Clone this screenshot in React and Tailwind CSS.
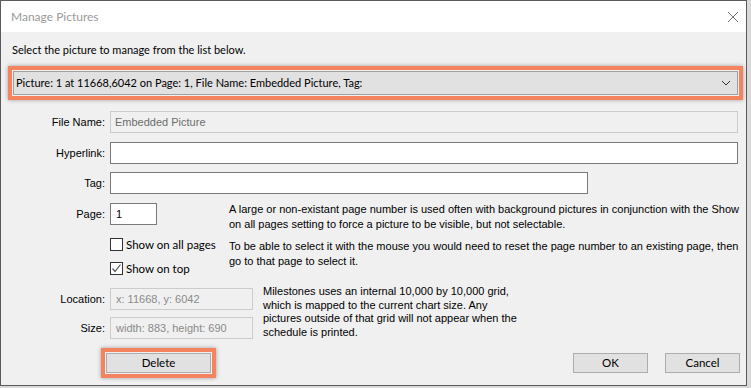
import React from "react";

function Label({ children }) {
  return (
    <div className="w-[104px] shrink-0 text-right text-[11px] text-black font-['Liberation_Sans',sans-serif]">
      {children}
    </div>
  );
}

function Checkbox({ checked, label, className = "" }) {
  return (
    <div className={"flex items-center " + className}>
      <div className="w-[13px] h-[13px] border border-[#333] bg-white flex items-center justify-center">
        {checked && (
          <svg width="11" height="11" viewBox="0 0 11 11">
            <path d="M1.5 5.5 L4 8.5 L9.5 1.5" fill="none" stroke="#555" strokeWidth="1.2" />
          </svg>
        )}
      </div>
      <span className="ml-[3px] text-[11.5px] text-black font-['Lato',sans-serif] leading-none">
        {label}
      </span>
    </div>
  );
}

export default function App() {
  return (
    <div className="w-[751px] h-[388px] bg-[#d9d9d9] overflow-hidden">
      <div className="w-[747px] h-[386px] border border-[#5a5a5a] bg-[#f0f0f0] flex flex-col">
        {/* Title bar */}
        <div className="h-[31px] bg-white flex items-center justify-between pl-[10px] pr-[6px]">
          <span className="text-[12px] text-[#9a9a9a] font-['Lato',sans-serif]">Manage Pictures</span>
          <svg width="12" height="12" viewBox="0 0 12 12" className="mr-[1px]">
            <path d="M1 1 L11 11 M11 1 L1 11" stroke="#666" strokeWidth="0.9" />
          </svg>
        </div>

        {/* Select text */}
        <div className="mt-[10px] pl-[11px] text-[11px] leading-[16px] text-black font-['Lato',sans-serif]">
          Select the picture to manage from the list below.
        </div>

        {/* Combobox with orange highlight */}
        <div className="mt-[8px] ml-[7px] mr-[3px] h-[34px] border-[4px] border-[#f4845f] p-[1px] shadow-[0_0_4px_rgba(0,0,0,0.35)]">
          <div className="h-full border border-[#a0a0a0] bg-[#e1e1e1] flex items-center justify-between pl-[2px] pr-[6px]">
            <span className="text-[11px] text-black font-['Lato',sans-serif]">
              Picture: 1 at 11668,6042 on Page: 1, File Name: Embedded Picture, Tag:
            </span>
            <svg width="10" height="6" viewBox="0 0 10 6">
              <path d="M1 1 L5 5 L9 1" fill="none" stroke="#333" strokeWidth="1" />
            </svg>
          </div>
        </div>

        {/* File Name */}
        <div className="mt-[11px] flex items-center">
          <Label>File Name:</Label>
          <div className="ml-[5px] w-[628px] h-[22px] border border-[#cccccc] bg-[#f0f0f0] flex items-center pl-[4px] text-[11px] text-[#6d6d6d] font-['Liberation_Sans',sans-serif]">
            Embedded Picture
          </div>
        </div>

        {/* Hyperlink */}
        <div className="mt-[9px] flex items-center">
          <Label>Hyperlink:</Label>
          <div className="ml-[5px] w-[628px] h-[22px] border border-[#7a7a7a] bg-white" />
        </div>

        {/* Tag */}
        <div className="mt-[8px] flex items-center">
          <Label>Tag:</Label>
          <div className="ml-[5px] w-[478px] h-[22px] border border-[#7a7a7a] bg-white" />
        </div>

        {/* Page + checkboxes + description */}
        <div className="mt-[8px] flex">
          <div className="w-[228px] shrink-0">
            <div className="mt-[1px] flex items-center">
              <Label>Page:</Label>
              <div className="ml-[5px] w-[47px] h-[22px] border border-[#7a7a7a] bg-white flex items-center pl-[5px] text-[11px] text-black font-['Liberation_Sans',sans-serif]">
                1
              </div>
            </div>
            <Checkbox className="mt-[13px] ml-[109px]" label="Show on all pages" />
            <Checkbox className="mt-[11px] ml-[109px]" checked label="Show on top" />
          </div>
          <div className="flex-1 text-[11px] leading-[15px] text-black font-['Liberation_Sans',sans-serif]">
            <p className="w-[510px]">
              A large or non-existant page number is used often with background pictures in conjunction with the Show on all pages setting to force a picture to be visible, but not selectable.
            </p>
            <p className="mt-[7px] w-[510px]">
              To be able to select it with the mouse you would need to reset the page number to an existing page, then go to that page to select it.
            </p>
          </div>
        </div>

        {/* Location / Size */}
        <div className="mt-[10px] flex">
          <div className="w-[262px] shrink-0">
            <div className="mt-[3px] flex items-center">
              <Label>Location:</Label>
              <div className="ml-[5px] w-[143px] h-[22px] border border-[#cccccc] bg-[#f0f0f0] flex items-center pl-[5px] text-[11px] text-[#8a8a8a] font-['Liberation_Sans',sans-serif]">
                x: 11668, y: 6042
              </div>
            </div>
            <div className="mt-[7px] flex items-center">
              <Label>Size:</Label>
              <div className="ml-[5px] w-[143px] h-[22px] border border-[#cccccc] bg-[#f0f0f0] flex items-center pl-[5px] text-[11px] text-[#8a8a8a] font-['Liberation_Sans',sans-serif]">
                width: 883, height: 690
              </div>
            </div>
          </div>
          <div className="w-[256px] text-[11px] leading-[13.5px] text-black font-['Liberation_Sans',sans-serif]">
            Milestones uses an internal 10,000 by 10,000 grid, which is mapped to the current chart size. Any pictures outside of that grid will not appear when the schedule is printed.
          </div>
        </div>

        {/* Buttons */}
        <div className="mt-[9px] flex items-center">
          <div className="ml-[100px] border-[4px] border-[#f4845f] p-[1px] shadow-[0_0_4px_rgba(0,0,0,0.35)]">
            <div className="w-[105px] h-[20px] border border-[#adadad] bg-[#e1e1e1] flex items-center justify-center text-[11.5px] text-black font-['Lato',sans-serif]">
              Delete
            </div>
          </div>
          <div className="ml-auto w-[75px] h-[20px] border border-[#adadad] bg-[#e1e1e1] flex items-center justify-center text-[11.5px] text-black font-['Lato',sans-serif]">
            OK
          </div>
          <div className="ml-[17px] mr-[6px] w-[75px] h-[20px] border border-[#adadad] bg-[#e1e1e1] flex items-center justify-center text-[11.5px] text-black font-['Lato',sans-serif]">
            Cancel
          </div>
        </div>
      </div>
    </div>
  );
}
